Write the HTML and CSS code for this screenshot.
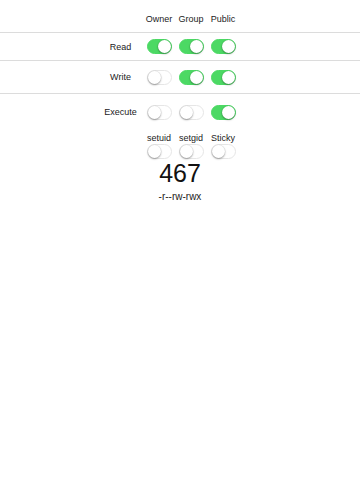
FILE: index.html
```html
<!DOCTYPE html>
<html lang="en">
<head>
  <meta charset="UTF-8">
  <title>chmod</title>
  <meta name="viewport" content="width=device-width, initial-scale=1.0">
  <link rel="stylesheet" href="styles.css">
</head>
<body>
  <div class="table">
    <div class="row head">
      <span class="label"></span>
      <span class="col">Owner</span>
      <span class="col">Group</span>
      <span class="col">Public</span>
    </div>
    <div class="row read">
      <span class="label">Read</span>
      <span class="col"><span class="switch on"></span></span>
      <span class="col"><span class="switch on"></span></span>
      <span class="col"><span class="switch on"></span></span>
    </div>
    <div class="row write">
      <span class="label">Write</span>
      <span class="col"><span class="switch"></span></span>
      <span class="col"><span class="switch on"></span></span>
      <span class="col"><span class="switch on"></span></span>
    </div>
    <div class="row exec">
      <span class="label">Execute</span>
      <span class="col"><span class="switch"></span></span>
      <span class="col"><span class="switch"></span></span>
      <span class="col"><span class="switch on"></span></span>
    </div>
  </div>

  <div class="special">
    <div class="special-item">
      <span>setuid</span>
      <span class="switch"></span>
    </div>
    <div class="special-item">
      <span>setgid</span>
      <span class="switch"></span>
    </div>
    <div class="special-item">
      <span>Sticky</span>
      <span class="switch"></span>
    </div>
  </div>

  <div class="octal">467</div>
  <div class="symbolic">-r--rw-rwx</div>
</body>
</html>
```

FILE: styles.css
```css
:root {
  --green: #4cd964;
  --line: #dcdcdc;
  --text: #222;
}

body {
  margin: 0;
  background: #fff;
  font-family: 'Liberation Sans', Arial, sans-serif;
  font-size: 9px;
  color: var(--text);
}

.row {
  display: grid;
  grid-template-columns: 45px 32px 32px 32px;
  align-items: center;
  padding-left: 98px;
  border-bottom: 1px solid var(--line);
}

.label {
  text-align: center;
}

.col {
  display: flex;
  justify-content: center;
}

.head {
  height: 32px;
  align-items: end;
}

.head .col {
  padding-bottom: 8px;
}

.read {
  height: 27px;
}

.write {
  height: 32px;
}

.exec {
  height: 36px;
  border-bottom: none;
}

.switch {
  position: relative;
  display: block;
  width: 25px;
  height: 15px;
  box-sizing: border-box;
  border-radius: 8px;
  border: 1px solid #e6e6e6;
  background: #fff;
}

.switch::after {
  content: "";
  position: absolute;
  top: 0;
  left: 0;
  width: 13px;
  height: 13px;
  border-radius: 50%;
  background: #fff;
  box-shadow: 0 1px 2px rgba(0,0,0,0.35), 0 0 0 0.5px rgba(0,0,0,0.08);
}

.switch.on {
  background: var(--green);
  border-color: var(--green);
}

.switch.on::after {
  left: 10px;
}

.special {
  display: flex;
  padding-left: 143px;
  margin-top: 3px;
}

.special-item {
  width: 32px;
  display: flex;
  flex-direction: column;
  align-items: center;
  gap: 1px;
}

.octal {
  text-align: center;
  font-size: 25px;
  color: #111;
}

.symbolic {
  text-align: center;
  font-size: 10px;
  margin-top: 3px;
}
```
